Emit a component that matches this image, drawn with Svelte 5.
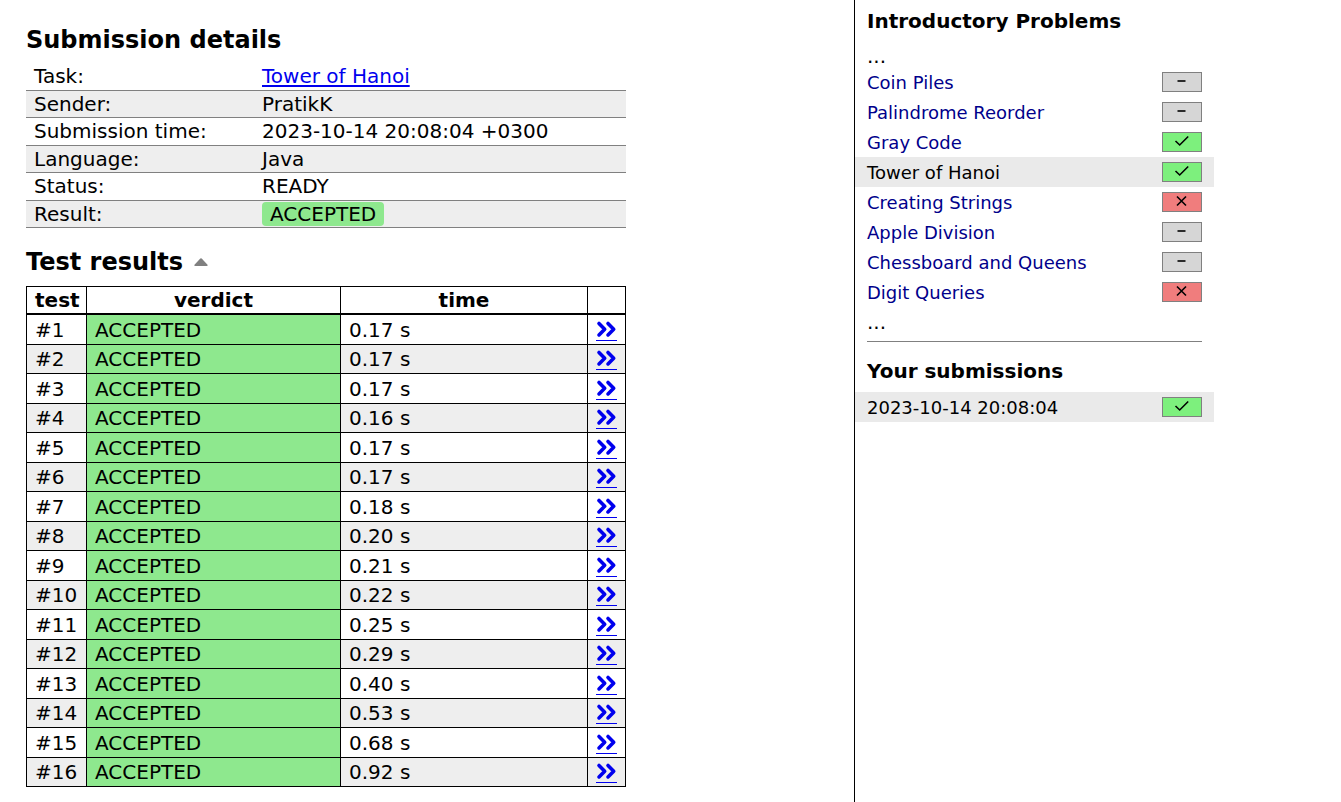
<script>
  const details = [
    ['Task:', 'Tower of Hanoi', 'link'],
    ['Sender:', 'PratikK'],
    ['Submission time:', '2023-10-14 20:08:04 +0300'],
    ['Language:', 'Java'],
    ['Status:', 'READY'],
    ['Result:', 'ACCEPTED', 'badge'],
  ];
  const times = [
    '0.17', '0.17', '0.17', '0.16', '0.17', '0.17', '0.18', '0.20',
    '0.21', '0.22', '0.25', '0.29', '0.40', '0.53', '0.68', '0.92',
  ];
  const problems = [
    ['Coin Piles', 'none'],
    ['Palindrome Reorder', 'none'],
    ['Gray Code', 'full'],
    ['Tower of Hanoi', 'full', true],
    ['Creating Strings', 'zero'],
    ['Apple Division', 'none'],
    ['Chessboard and Queens', 'none'],
    ['Digit Queries', 'zero'],
  ];
  const marks = {
    none: 'M14.5 8H22.5',
    full: 'M12.5 8L16.7 12L25.2 3.5',
    zero: 'M14 3.5L23 12.5M23 3.5L14 12.5',
  };
</script>

{#snippet score(kind)}
  <span class="score {kind}">
    <svg viewBox="0 0 38 18" aria-hidden="true"><path d={marks[kind]} /></svg>
  </span>
{/snippet}

<div class="page">
  <main>
    <h2>Submission details</h2>
    <table class="summary">
      <tbody>
        {#each details as [label, value, kind]}
          <tr>
            <th scope="row">{label}</th>
            <td>
              {#if kind === 'link'}
                <a href="#task">{value}</a>
              {:else if kind === 'badge'}
                <span class="verdict">{value}</span>
              {:else}
                {value}
              {/if}
            </td>
          </tr>
        {/each}
      </tbody>
    </table>

    <h2 class="results-title">
      Test results
      <svg class="caret" viewBox="0 0 14 8" aria-hidden="true">
        <path d="M1.3 8Q-.2 7.7.5 6.7L6.3.6Q7 0 7.7.6L13.5 6.7Q14.2 7.7 12.7 8Z" />
      </svg>
    </h2>
    <table class="results">
      <thead>
        <tr>
          <th class="c-test">test</th>
          <th class="c-verdict">verdict</th>
          <th>time</th>
          <th class="c-more"></th>
        </tr>
      </thead>
      <tbody>
        {#each times as time, i}
          <tr>
            <td>#{i + 1}</td>
            <td class="accepted">ACCEPTED</td>
            <td>{time} s</td>
            <td class="more">
              <a href="#test{i + 1}" aria-label="Test {i + 1}">
                <svg viewBox="0 0 21 20" aria-hidden="true">
                  <path d="M3 4.5L8.7 10.2L3 15.9M12 4.5L17.7 10.2L12 15.9" />
                </svg>
              </a>
            </td>
          </tr>
        {/each}
      </tbody>
    </table>
  </main>

  <aside>
    <h4>Introductory Problems</h4>
    <div class="dots before">...</div>
    <nav>
      {#each problems as [name, kind, current]}
        <div class="item" class:current>
          <a href="#problem">{name}</a>
          {@render score(kind)}
        </div>
      {/each}
    </nav>
    <div class="dots after">...</div>
    <hr />
    <h4>Your submissions</h4>
    <div class="item current">
      <a href="#submission">2023-10-14 20:08:04</a>
      {@render score('full')}
    </div>
  </aside>
</div>

<style>
  :global(body) {
    margin: 0;
    background: #fff;
  }
  .page {
    box-sizing: border-box;
    display: flex;
    min-height: 100vh;
    padding-right: 127px;
    color: #000;
    font-family: Verdana, "DejaVu Sans", sans-serif;
    font-size: 20px;
  }
  main {
    flex: 1;
    padding: 24px 26px 15px;
  }
  h2 {
    margin: 0 0 6px;
    font-size: 24px;
    line-height: 32px;
  }
  table {
    width: 100%;
    max-width: 600px;
    border-collapse: collapse;
    line-height: 24px;
  }
  th,
  td {
    box-sizing: border-box;
    padding: 0 8px;
  }
  .summary {
    margin-bottom: 18px;
  }
  .summary tr {
    height: 28px;
    border-bottom: 1px solid #808080;
  }
  .summary tr:nth-child(even) {
    height: 27px;
    background: #eee;
  }
  .summary th {
    width: 228px;
    font-weight: normal;
    text-align: left;
  }
  a {
    color: #00e;
  }
  .summary a {
    text-decoration-thickness: 2px;
    text-underline-offset: 2px;
  }
  .verdict {
    display: block;
    width: fit-content;
    padding: 0 8px;
    border-radius: 4px;
    background: #8ee88e;
  }
  .results-title {
    display: flex;
    align-items: center;
    gap: 11px;
    margin-bottom: 8px;
  }
  .caret {
    width: 14px;
    height: 8px;
    fill: #808080;
  }
  .results {
    table-layout: fixed;
  }
  .results th,
  .results td {
    border: 1px solid #000;
  }
  .results thead th {
    height: 28px;
    border-bottom-width: 2px;
  }
  .results td {
    height: 30px;
    padding-top: 2px;
  }
  .results tr:nth-child(even) td {
    height: 29px;
    padding-top: 0;
  }
  .results tbody tr:nth-child(even) {
    background: #eee;
  }
  .c-test {
    width: 60px;
  }
  .c-verdict {
    width: 254px;
  }
  .c-more {
    width: 38px;
  }
  .accepted {
    background: #8ee88e;
  }
  .results .more {
    padding-right: 7px;
  }
  .more a {
    display: block;
    width: 21px;
    height: 21px;
    border-bottom: 1px solid #00e;
  }
  .more svg {
    display: block;
    width: 21px;
    height: 20px;
    fill: none;
    stroke: #00e;
    stroke-width: 3.6;
    stroke-linecap: round;
    stroke-linejoin: round;
  }
  aside {
    box-sizing: border-box;
    width: 360px;
    border-left: 1px solid #000;
    font-size: 18px;
  }
  h4 {
    margin: 0;
    padding: 8px 12px;
    font-size: 20px;
    line-height: 26px;
  }
  .dots {
    padding: 2px 12px 0;
    font-size: 20px;
    line-height: 24px;
  }
  .before {
    margin-bottom: -1px;
  }
  .after {
    padding-top: 3px;
  }
  .item {
    display: flex;
    align-items: center;
    justify-content: space-between;
    height: 30px;
    padding: 0 12px;
  }
  .item a {
    color: #00008b;
    text-decoration: none;
  }
  .current {
    background: #eaeaea;
  }
  .item.current a {
    color: #000;
  }
  .score {
    box-sizing: border-box;
    width: 40px;
    height: 20px;
    border: 1px solid #808080;
  }
  .score svg {
    display: block;
    width: 38px;
    height: 18px;
    fill: none;
    stroke: #000;
    stroke-width: 1.6;
  }
  .none {
    background: #d6d6d6;
  }
  .full {
    background: #7df07d;
  }
  .zero {
    background: #f07d7d;
  }
  hr {
    margin: 7px 12px 8px;
    border: 0;
    border-top: 1px solid #808080;
  }
</style>
